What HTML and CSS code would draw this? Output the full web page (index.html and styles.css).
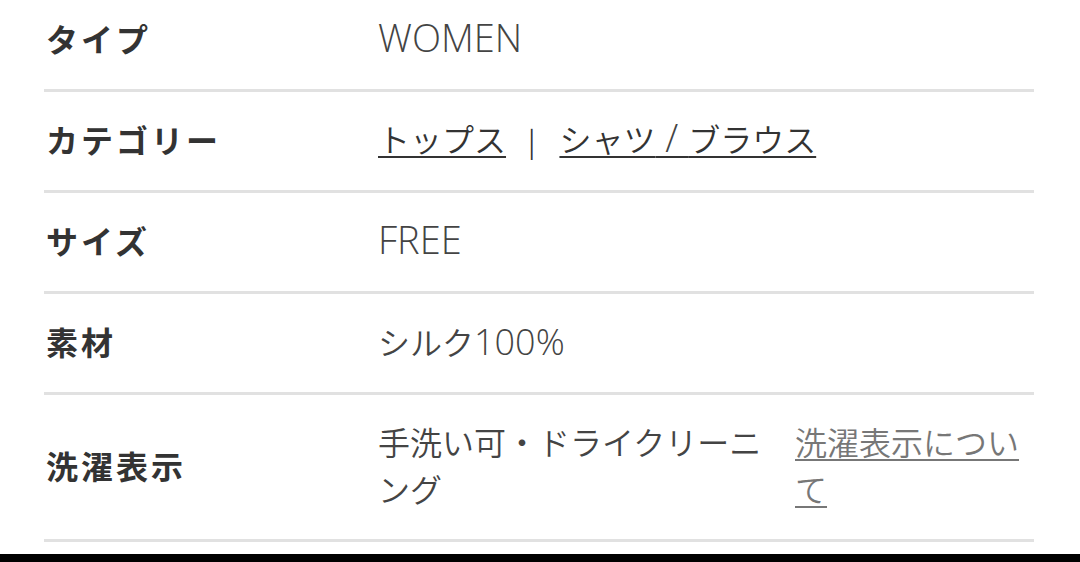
FILE: index.html
```html
<!DOCTYPE html>
<html lang="ja">
<head>
<meta charset="utf-8">
<link rel="stylesheet" href="styles.css">
</head>
<body>
<div class="spec">
  <div class="row">
    <div class="label">タイプ</div>
    <div class="value"><span class="latin">WOMEN</span></div>
  </div>
  <div class="row">
    <div class="label">カテゴリー</div>
    <div class="value"><a class="link" href="#">トップス</a><span class="sep">|</span><a class="link" href="#">シャツ<span class="latin"> / </span>ブラウス</a></div>
  </div>
  <div class="row">
    <div class="label">サイズ</div>
    <div class="value"><span class="latin">FREE</span></div>
  </div>
  <div class="row">
    <div class="label">素材</div>
    <div class="value">シルク<span class="latin latin-num">100%</span></div>
  </div>
  <div class="row row-tall">
    <div class="label">洗濯表示</div>
    <div class="value value-split">
      <span class="wash-text">手洗い可・ドライクリーニング</span>
      <a class="link link-light" href="#">洗濯表示について</a>
    </div>
  </div>
</div>
<div class="bottom-bar"></div>
</body>
</html>
```
FILE: styles.css
```css
html, body {
  margin: 0;
  padding: 0;
  background: #fff;
}
body {
  width: 1080px;
  height: 562px;
  overflow: hidden;
  font-family: "Noto Sans CJK JP", "Noto Sans", sans-serif;
}
.spec {
  margin: -9px 46px 0 44px;
}
.row {
  display: grid;
  grid-template-columns: 334px 1fr;
  align-items: center;
  min-height: 98px;
  border-bottom: 3px solid #e1e1e1;
}
.row-tall {
  padding: 25px 0;
  min-height: 0;
}
.label {
  padding-left: 2px;
  font-size: 32px;
  font-weight: 700;
  letter-spacing: 3px;
  color: #333;
  position: relative;
  top: -2px;
}
.value {
  font-family: "Noto Sans CJK JP", sans-serif;
  font-size: 32px;
  font-weight: 350;
  color: #444;
  line-height: 47px;
  position: relative;
  top: -2px;
}
.latin {
  font-family: "Open Sans", "Noto Sans", sans-serif;
  font-size: 38px;
  font-weight: 300;
  line-height: 1;
  color: #444;
}
.latin-num {
  font-size: 36px;
}
.link {
  color: #333;
  text-decoration: underline;
  text-decoration-thickness: 2px;
  text-underline-offset: 4px;
}
.link-light {
  color: #777;
}
.sep {
  display: inline-block;
  margin: 0 24px 0 22px;
  color: #333;
  font-size: 28px;
}
.value-split {
  display: flex;
  gap: 17px;
}
.wash-text {
  width: 400px;
  flex: none;
}
.value-split .link {
  flex: 1;
}
.bottom-bar {
  margin-top: 12px;
  height: 8px;
  background: #000;
}
```
